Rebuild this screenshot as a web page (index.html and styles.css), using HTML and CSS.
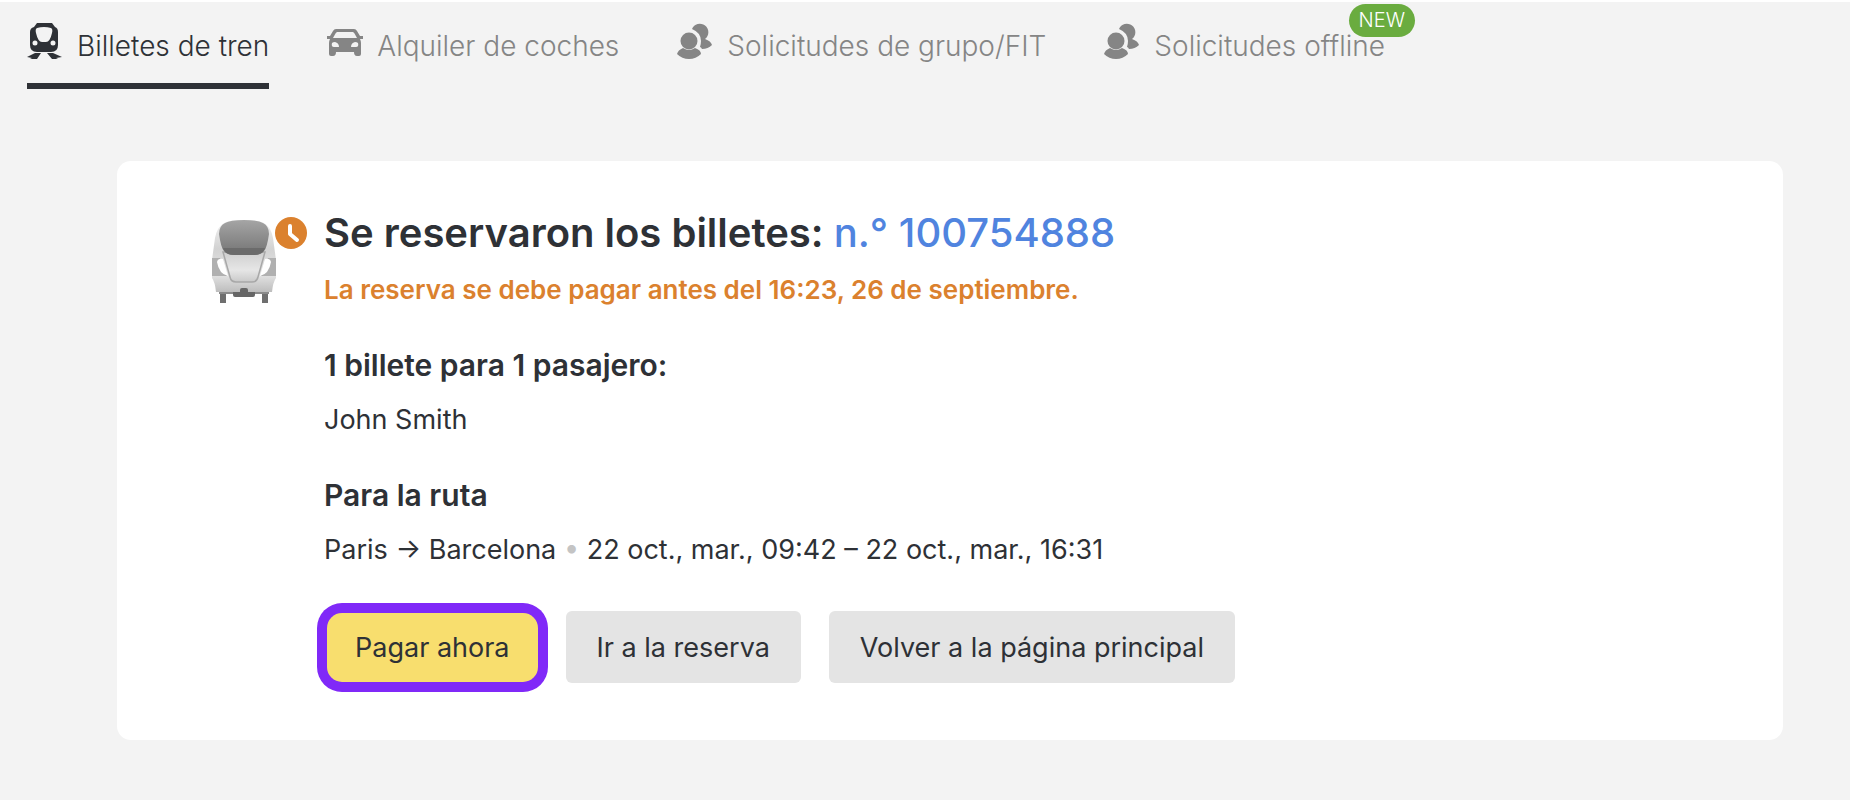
FILE: index.html
```html
<!DOCTYPE html>
<html lang="es">
<head>
<meta charset="UTF-8">
<meta name="viewport" content="width=device-width, initial-scale=1.0">
<title>Reserva</title>
<link rel="stylesheet" href="styles.css">
</head>
<body>
<svg class="sprite" aria-hidden="true">
    <symbol id="people" viewBox="0 0 36 36">
        <circle cx="12" cy="18" r="8.500"/>
        <path d="M6 25Q12 29 18 25Q24 27 24 31Q19 36 12 36Q5 36 0 31Q1 27 6 25Z"/>
        <path d="M15 6A8.500 8.500 0 1 1 28 16Q34 18 35 22Q31 26 25 26Q24 24 23 24Q27 11 15 6Z"/>
    </symbol>
</svg>

<nav class="tabs">
    <a href="#" class="tab active">
        <svg class="tab-icon" viewBox="0 0 36 36">
            <path fill-rule="evenodd" d="M10 0H25L28 4Q31 5 31 9V22Q31 29 24 29H10Q3 29 3 22V9Q3 5 7 4ZM10 5Q8 6 9 10Q11 19 15 19H19Q23 19 25 10Q26 6 24 5Q17 3 10 5ZM8 17.500A2.500 2.500 0 1 0 8 22.500A2.500 2.500 0 1 0 8 17.500ZM26 17.500A2.500 2.500 0 1 0 26 22.500A2.500 2.500 0 1 0 26 17.500Z"/>
            <path d="M8 30H14L10 36H3L5 35L0 34ZM20 30H26L35 34L29 35L31 36H25Z"/>
        </svg>
        <span>Billetes de tren</span>
    </a>
    <a href="#" class="tab">
        <svg class="tab-icon" viewBox="0 0 36 36">
            <path fill-rule="evenodd" d="M9 6H27Q29 6 30 8L33 13H36V16H33Q34 18 34 20V31Q34 33 32 33H30Q27 33 27 29H9Q9 33 6 33H4Q2 33 2 31V20Q2 18 3 16H0V13H3L6 8Q7 6 9 6ZM10 9Q9 9 6 15H30Q27 9 26 9ZM5 20Q4 24 7 24H12Q12 20 8 19Q6 19 5 20ZM31 20Q32 24 29 24H24Q24 20 28 19Q30 19 31 20Z"/>
        </svg>
        <span>Alquiler de coches</span>
    </a>
    <a href="#" class="tab">
        <svg class="tab-icon"><use href="#people"/></svg>
        <span>Solicitudes de grupo/FIT</span>
    </a>
    <a href="#" class="tab">
        <svg class="tab-icon"><use href="#people"/></svg>
        <span>Solicitudes offline</span>
        <span class="badge">NEW</span>
    </a>
</nav>

<main class="card">
    <div class="train">
        <svg class="train-icon" viewBox="0 0 66 84">
            <defs>
                <linearGradient id="body" x2="0" y2="1">
                    <stop offset="0" stop-color="#f4f4f4"/>
                    <stop offset=".4" stop-color="#d2d2d2"/>
                    <stop offset=".75" stop-color="#e4e4e4"/>
                    <stop offset="1" stop-color="#bdbdbd"/>
                </linearGradient>
                <linearGradient id="glass" x2="0" y2="1">
                    <stop offset="0" stop-color="#a5a5a5"/>
                    <stop offset="1" stop-color="#747474"/>
                </linearGradient>
                <linearGradient id="nose" x2="0" y2="1">
                    <stop offset="0" stop-color="#cfcfcf"/>
                    <stop offset=".6" stop-color="#e6e6e6"/>
                    <stop offset="1" stop-color="#c9c9c9"/>
                </linearGradient>
            </defs>
            <path fill="#6f6f6f" d="M9 72H15V83H9ZM51 72H57V83H51Z"/>
            <path fill="#8a8a8a" d="M8 71H58V74H8Z"/>
            <path fill="url(#body)" d="M33 0Q48 0 53 3Q60 7 62 18L65 40V58Q62 62 61 72H5Q4 62 1 58V40L4 18Q6 7 13 3Q18 0 33 0Z"/>
            <path fill="#b0b0b0" d="M1 38H9L16 56H1ZM65 38H57L50 56H65Z"/>
            <path fill="#fff" d="M6 42Q7 38 12 39L17 56Q8 54 6 42ZM60 42Q59 38 54 39L49 56Q58 54 60 42Z"/>
            <path fill="url(#nose)" stroke="#a8a8a8" stroke-width="1.500" d="M12 32L19 57Q20 62 25 62H41Q46 62 47 57L54 32Z"/>
            <path fill="url(#glass)" d="M33 0Q47 0 52 3Q58 6 58 14Q56 28 53 31Q50 35 43 35H23Q16 35 13 31Q10 28 8 14Q8 6 14 3Q19 0 33 0Z"/>
            <path fill="#6b6b6b" d="M12 28H54Q52 35 43 35H23Q14 35 12 28Z"/>
            <path fill="#666" d="M22 72H29V70Q29 68 31 68H35Q37 68 37 70V72H44V75Q44 77 42 77H24Q22 77 22 75Z"/>
        </svg>
        <svg class="clock" viewBox="0 0 32 32">
            <circle cx="16" cy="16" r="16" fill="#db812e"/>
            <path d="M15 9V17L22 23" fill="none" stroke="#fff" stroke-width="4" stroke-linecap="round" stroke-linejoin="round"/>
        </svg>
    </div>

    <div class="info">
        <h1>Se reservaron los billetes: <a href="#">n.° 100754888</a></h1>
        <p class="deadline">La reserva se debe pagar antes del 16:23, 26 de septiembre.</p>

        <h2>1 billete para 1 pasajero:</h2>
        <p>John Smith</p>

        <h2>Para la ruta</h2>
        <p>Paris → Barcelona <span class="dot">•</span> 22 oct., mar., 09:42 – 22 oct., mar., 16:31</p>

        <div class="buttons">
            <button type="button" class="pay">Pagar ahora</button>
            <button type="button">Ir a la reserva</button>
            <button type="button">Volver a la página principal</button>
        </div>
    </div>
</main>
</body>
</html>
```
FILE: styles.css
```css
body {
    font-family: Inter, sans-serif;
    font-size: 27px;
    line-height: 36px;
    color: #2e3136;
    background-color: #f3f3f3;
    margin: 0;
    border-top: 2px solid #fff;
}

.sprite {
    display: none;
}

.tabs {
    display: flex;
    gap: 58px;
    padding: 21px 27px 0;
}

.tab {
    position: relative;
    display: flex;
    gap: 14px;
    height: 60px;
    font-size: 28px;
    font-weight: 300;
    color: #858585;
    white-space: nowrap;
    text-decoration: none;
}

.tab span {
    padding-top: 5px;
}

.tab.active {
    color: #2e3136;
    border-bottom: 6px solid #2e3136;
}

.tab-icon {
    width: 36px;
    height: 36px;
    flex: none;
    fill: currentColor;
}

.tab .badge {
    position: absolute;
    top: -19px;
    right: -30px;
    padding: 0 10px;
    border-radius: 17px;
    font-size: 20px;
    line-height: 33px;
    color: #fff;
    background-color: #6aac3f;
}

.card {
    display: flex;
    margin: 72px 67px 60px 117px;
    padding: 48px 94px 57px;
    border-radius: 14px;
    background-color: #fff;
}

.train {
    display: flex;
    flex: none;
    align-items: flex-start;
    width: 113px;
}

.train-icon {
    width: 66px;
    height: 84px;
    margin-top: 11px;
}

.clock {
    width: 32px;
    height: 32px;
    margin-top: 8px;
    margin-left: -2px;
}

h1,
h2,
p {
    margin: 0;
}

h1 {
    font-size: 40px;
    line-height: 48px;
    font-weight: 600;
}

h1 a {
    color: #5084df;
    font-weight: 500;
    text-decoration: none;
}

.deadline {
    margin-top: 15px;
    font-size: 26px;
    font-weight: 600;
    color: #db812e;
}

h2 {
    margin-top: 37px;
    margin-bottom: 17px;
    font-size: 30px;
    line-height: 40px;
    font-weight: 600;
}

.dot {
    color: #c4c4c4;
}

.buttons {
    display: flex;
    align-items: center;
    gap: 28px;
    margin-top: 43px;
}

button {
    height: 72px;
    padding: 2px 31px 0;
    border: none;
    border-radius: 6px;
    font: inherit;
    color: #2e3136;
    background-color: #e4e4e4;
    cursor: pointer;
}

.pay {
    height: 69px;
    margin-left: 3px;
    padding: 2px 28px 0;
    border-radius: 15px;
    background-color: #f8de6e;
    box-shadow: 0 0 0 10px #8029f8;
}
```
